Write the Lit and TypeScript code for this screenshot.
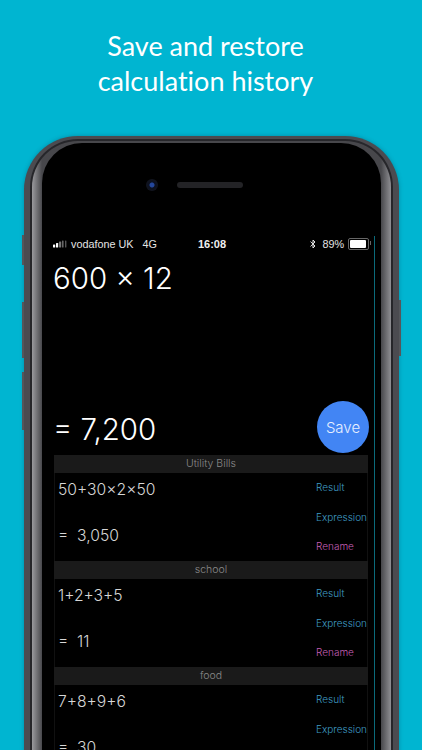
import { LitElement, html, css } from "lit";
import { customElement } from "lit/decorators.js";

const groups = [
  { name: "Utility Bills", expr: "50+30×2×50", res: "=  3,050" },
  { name: "school", expr: "1+2+3+5", res: "=  11" },
  { name: "food", expr: "7+8+9+6", res: "=  30" },
];

@customElement("app-root")
export class AppRoot extends LitElement {
  static styles = css`
    :host { display: block; width: 422px; height: 750px; overflow: hidden; background: #00b5d1; font-family: Inter, "Liberation Sans", sans-serif; }
    .title { margin: 0; padding: 28px 11px 0 0; height: 136px; box-sizing: border-box; text-align: center; color: #fff; font: 400 27px/35px Lato, "Open Sans", sans-serif; font-variant-ligatures: none; }
    .phone { position: relative; margin-left: 24px; width: 375px; height: 720px; box-sizing: border-box; padding: 3px 6px 0 6px; border-radius: 54px 54px 0 0; background: #4b4b50; box-shadow: 0 0 4px rgba(0,60,80,.35); }
    .btn { position: absolute; width: 2px; background: #55565a; }
    .b1 { left: -2px; top: 99px; height: 30px; }
    .b2 { left: -2px; top: 166px; height: 56px; }
    .b3 { left: -2px; top: 236px; height: 58px; }
    .b4 { right: -2px; top: 164px; height: 56px; }
    .rim { height: 100%; box-sizing: border-box; padding: 2px 2px 0; border-radius: 48px 48px 0 0; background: #26262a; }
    .bezel { height: 100%; box-sizing: border-box; padding: 2px 10px 0; border-radius: 46px 46px 0 0; background: linear-gradient(90deg, #9a9a9e 0, #47474b 10px, #47474b calc(100% - 10px), #8f8f93 100%); }
    .screen { height: 100%; box-sizing: border-box; padding-top: 36px; border-radius: 40px 40px 0 0; background: #000; }
    .sensors { display: flex; align-items: center; gap: 19px; padding-left: 104px; height: 12px; }
    .camera { width: 12px; height: 12px; border-radius: 50%; background: radial-gradient(circle, #24479c 0 2px, #0b1020 3px, #17181c 100%); }
    .speaker { width: 66px; height: 6px; border-radius: 3px; background: #232326; }
    .app { margin: 45px 6px 0 11px; height: 600px; border-right: 1px solid #0b6a7a; padding-right: 6px; }
    .status { display: flex; align-items: center; height: 16px; color: #e4e4e4; font: 400 10.8px "Liberation Sans", sans-serif; }
    .left, .right { flex: 1; display: flex; align-items: center; }
    .right { justify-content: flex-end; margin-right: -3px; }
    .carrier { margin-left: 4px; }
    .net { margin-left: 9px; }
    .time { font-weight: 700; font-size: 11px; color: #f0f0f0; }
    .pct { margin: 0 4px 0 6px; }
    .battery { position: relative; width: 17px; height: 8px; border: 1px solid #666; border-radius: 2px; padding: 1px; display: flex; margin-right: 2px; }
    .battery i { width: 92%; background: #fff; border-radius: 1px; }
    .battery::after { content: ""; position: absolute; right: -3px; top: 2px; width: 1px; height: 4px; background: #666; }
    .expr { margin: 5px 0 0; height: 42px; color: #fff; font: 300 29.5px/42px Inter, sans-serif; }
    .calc { display: flex; justify-content: space-between; align-items: center; margin-top: 102px; height: 52px; color: #fff; font: 300 29.5px/42px Inter, sans-serif; }
    .calc span { padding-top: 3px; }
    .save { width: 52px; height: 52px; border: 0; padding: 0; margin-right: -1px; border-radius: 50%; background: #4285f4; color: #e8f0ff; font: 300 15px Inter, sans-serif; }
    .list { margin: 2px 0 0 1px; }
    .head { height: 18px; background: #1a1a1a; color: #8a8a8a; font: 300 10.5px/18px Inter, sans-serif; text-align: center; }
    .row { display: flex; justify-content: space-between; height: 88px; box-sizing: border-box; padding-left: 3px; border: solid #111; border-width: 0 1px; }
    .vals { display: flex; flex-direction: column; color: #d6d6d6; font: 300 15.7px/20px Inter, sans-serif; padding-top: 7px; gap: 26px; }
    .res { white-space: pre; }
    .acts { display: flex; flex-direction: column; width: 51px; padding-top: 7px; gap: 15px; font: 300 10px/14.5px Inter, sans-serif; }
    .blue { color: #3f9cc4; }
    .pink { color: #c45fb5; }
  `;

  render() {
    return html`
      <h1 class="title">Save and restore<br />calculation history</h1>
      <div class="phone">
        <span class="btn b1"></span><span class="btn b2"></span><span class="btn b3"></span><span class="btn b4"></span>
        <div class="rim"><div class="bezel"><div class="screen">
          <div class="sensors"><span class="camera"></span><span class="speaker"></span></div>
          <div class="app">
            <div class="status">
              <div class="left">
                <svg width="14" height="8" viewBox="0 0 14 8">
                  <rect x="0" y="4.5" width="2.2" height="3" rx=".6" fill="#fff" />
                  <rect x="3" y="3" width="2.2" height="4.5" rx=".6" fill="#fff" />
                  <rect x="6" y="1.5" width="2.2" height="6" rx=".6" fill="#777" />
                  <rect x="9" y=".5" width="1.6" height="7" rx=".6" fill="#666" />
                  <rect x="12" y=".5" width="1.4" height="7" rx=".6" fill="#555" />
                </svg>
                <span class="carrier">vodafone UK</span><span class="net">4G</span>
              </div>
              <div class="time">16:08</div>
              <div class="right">
                <svg width="6" height="10" viewBox="0 0 6 10" fill="none" stroke="#e4e4e4" stroke-width="1"><path d="M.5 2.6 5 7 3 9V1l2 2L.5 7.4" /></svg>
                <span class="pct">89%</span>
                <span class="battery"><i></i></span>
              </div>
            </div>
            <div class="expr">600 × 12</div>
            <div class="calc"><span>= 7,200</span><button class="save">Save</button></div>
            <div class="list">
              ${groups.map(
                (g) => html`
                  <div class="head">${g.name}</div>
                  <div class="row">
                    <div class="vals"><span>${g.expr}</span><span class="res">${g.res}</span></div>
                    <div class="acts"><span class="blue">Result</span><span class="blue">Expression</span><span class="pink">Rename</span></div>
                  </div>
                `
              )}
            </div>
          </div>
        </div></div></div>
      </div>
    `;
  }
}
